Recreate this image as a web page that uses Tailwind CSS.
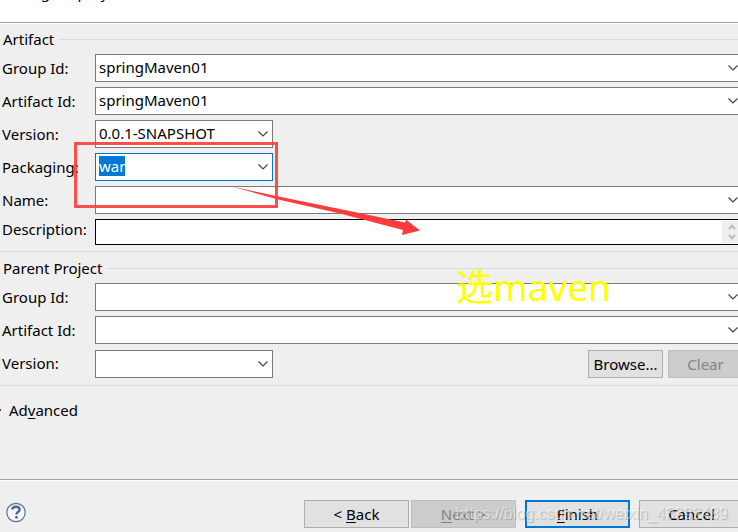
<!DOCTYPE html>
<html lang="en">
<head>
    <meta charset="UTF-8">
    <meta name="viewport" content="width=device-width, initial-scale=1.0">
    <title>New Maven Project</title>
    <script src="https://cdn.jsdelivr.net/npm/@tailwindcss/browser@4"></script>
</head>
<body class="bg-[#efefef] text-black text-[15px] leading-5 font-['Noto_Sans','Noto_Sans_CJK_SC',sans-serif] overflow-hidden">
    <svg class="hidden">
        <symbol id="chevron" viewBox="0 0 10 6"><path d="M.5 .5 5 5 9.5 .5" fill="none" stroke="#444" stroke-width="1.2"/></symbol>
    </svg>

    <div class="relative min-h-screen flex flex-col">
        <!-- Header -->
        <header class="h-[23px] bg-white border-b border-[#a0a0a0] flex items-end pb-5 pl-1 overflow-hidden">
            <p class="whitespace-nowrap">Configure project</p>
        </header>

        <!-- The form is a little wider than the window -->
        <form class="w-[calc(100%+5px)] border-t border-white">
            <!-- Artifact -->
            <fieldset class="pt-[5px] pb-1.5 border-b border-[#dcdcdc]">
                <legend class="contents"><span class="flex items-center gap-1 pl-[3px] after:flex-1 after:h-px after:bg-[#dcdcdc]">Artifact</span></legend>
                <div class="grid grid-cols-[93px_1fr] items-center gap-y-[5px] pl-0.5 pt-[5px] [&>label]:pb-px">
                    <label for="group-id">Group Id:</label>
                    <div class="flex h-7 bg-white border border-[#7a7a7a]">
                        <input id="group-id" type="text" value="springMaven01" class="flex-1 min-w-0 pl-[3px] pb-0.5 outline-none">
                        <button type="button" aria-label="Group Id history" class="px-1"><svg class="w-2.5 h-1.5"><use href="#chevron"/></svg></button>
                    </div>
                    <label for="artifact-id">Artifact Id:</label>
                    <div class="flex h-7 bg-white border border-[#7a7a7a]">
                        <input id="artifact-id" type="text" value="springMaven01" class="flex-1 min-w-0 pl-[3px] pb-0.5 outline-none">
                        <button type="button" aria-label="Artifact Id history" class="px-1"><svg class="w-2.5 h-1.5"><use href="#chevron"/></svg></button>
                    </div>
                    <label for="version">Version:</label>
                    <div class="grid w-[178px] h-7 items-center bg-white border border-[#7a7a7a]">
                        <select id="version" class="col-start-1 row-start-1 appearance-none pl-[3px] pb-0.5 outline-none">
                            <option>0.0.1-SNAPSHOT</option>
                        </select>
                        <svg class="col-start-1 row-start-1 justify-self-end mr-1 w-2.5 h-1.5 pointer-events-none"><use href="#chevron"/></svg>
                    </div>
                    <label for="packaging">Packaging:</label>
                    <div class="flex w-[178px] h-7 bg-white border border-[#0078d7]">
                        <input id="packaging" type="text" value="war" class="flex-1 min-w-0 pl-[3px] pb-0.5 outline-none caret-[#ff8728] selection:bg-[#0078d7] selection:text-white">
                        <button type="button" aria-label="Packaging types" class="px-1"><svg class="w-2.5 h-1.5"><use href="#chevron"/></svg></button>
                    </div>
                    <label for="name">Name:</label>
                    <div class="flex h-7 bg-white border border-[#7a7a7a]">
                        <input id="name" type="text" class="flex-1 min-w-0 pl-[3px] pb-0.5 outline-none">
                        <button type="button" aria-label="Name history" class="px-1"><svg class="w-2.5 h-1.5"><use href="#chevron"/></svg></button>
                    </div>
                    <label for="description" class="self-start">Description:</label>
                    <div class="flex h-[26px] bg-white border border-black">
                        <textarea id="description" class="flex-1 min-w-0 pl-[3px] resize-none outline-none overflow-hidden"></textarea>
                        <div class="w-[19px] my-px mr-px flex flex-col items-center justify-between bg-[#efefef] py-0.5">
                            <svg class="w-2 h-[7px]" viewBox="0 0 8 7"><path d="M1 6 4 2.500 7 6" fill="none" stroke="#bdbdbd" stroke-width="2"/></svg>
                            <svg class="w-2 h-[7px]" viewBox="0 0 8 7"><path d="M1 1 4 4.500 7 1" fill="none" stroke="#bdbdbd" stroke-width="2"/></svg>
                        </div>
                    </div>
                </div>
            </fieldset>

            <!-- Parent Project -->
            <fieldset class="pt-1.5 pb-[7px] border-b border-[#dcdcdc]">
                <legend class="contents"><span class="flex items-center gap-1 pl-[3px] after:flex-1 after:h-px after:bg-[#dcdcdc]">Parent Project</span></legend>
                <div class="grid grid-cols-[93px_1fr] items-center gap-y-[5px] pl-0.5 pt-[5px] [&>label]:pb-px">
                    <label for="parent-group-id">Group Id:</label>
                    <div class="flex h-7 bg-white border border-[#7a7a7a]">
                        <input id="parent-group-id" type="text" class="flex-1 min-w-0 pl-[3px] pb-0.5 outline-none">
                        <button type="button" aria-label="Parent Group Id history" class="px-1"><svg class="w-2.5 h-1.5"><use href="#chevron"/></svg></button>
                    </div>
                    <label for="parent-artifact-id">Artifact Id:</label>
                    <div class="flex h-7 bg-white border border-[#7a7a7a]">
                        <input id="parent-artifact-id" type="text" class="flex-1 min-w-0 pl-[3px] pb-0.5 outline-none">
                        <button type="button" aria-label="Parent Artifact Id history" class="px-1"><svg class="w-2.5 h-1.5"><use href="#chevron"/></svg></button>
                    </div>
                    <label for="parent-version">Version:</label>
                    <div class="flex gap-[5px] pt-px">
                        <div class="grid w-[178px] h-7 items-center bg-white border border-[#7a7a7a] mr-auto">
                            <select id="parent-version" class="col-start-1 row-start-1 appearance-none pl-[3px] pb-0.5 outline-none">
                                <option></option>
                            </select>
                            <svg class="col-start-1 row-start-1 justify-self-end mr-1 w-2.5 h-1.5 pointer-events-none"><use href="#chevron"/></svg>
                        </div>
                        <button type="button" class="w-[75px] h-7 bg-[#e1e1e1] border border-[#adadad]">Browse...</button>
                        <button type="button" disabled class="w-[75px] h-7 bg-[#cccccc] border border-[#bfbfbf] text-[#838383]">Clear</button>
                    </div>
                </div>
            </fieldset>

            <!-- Advanced -->
            <button type="button" class="flex items-center gap-2 mt-3.5">
                <svg class="w-px h-1" viewBox="0 0 1 4"><path d="M0 1h1v2H0z" fill="#444"/></svg>
                <span>Ad<u class="underline-offset-2">v</u>anced</span>
            </button>
        </form>

        <!-- Wizard buttons -->
        <footer class="mt-auto w-[calc(100%+6px)] h-[53px] border-t border-[#a0a0a0] shadow-[inset_0_1px_0_#fff] flex items-start pt-5">
            <button type="button" aria-label="Help" class="ml-1.5 mr-auto mt-0.5">
                <svg class="w-5 h-[21px]" viewBox="0 0 20 21">
                    <circle cx="10" cy="10.500" r="9.200" fill="#f5f6f8" stroke="#5f7296" stroke-width="1.200"/>
                    <path d="M6.400 7.500C6.500 5.700 8 4.700 10 4.700c2.100 0 3.600 1 3.600 2.800 0 1.500-1 2.100-1.900 2.700-.9.600-1.200 1-1.200 2.300" fill="none" stroke="#50648c" stroke-width="2.400"/>
                    <rect x="9.100" y="14" width="2.700" height="2.400" rx="1" fill="#50648c"/>
                </svg>
            </button>
            <button type="button" class="w-[105px] h-7 bg-[#e1e1e1] border border-[#adadad]">&lt; <u class="underline-offset-2">B</u>ack</button>
            <button type="button" disabled class="ml-0.5 w-[105px] h-7 bg-[#cccccc] border border-[#bfbfbf] text-[#838383]"><u class="underline-offset-2">N</u>ext &gt;</button>
            <button type="submit" class="ml-[9px] w-[105px] h-7 bg-[#e1e1e1] border-2 border-[#0078d7]"><u class="underline-offset-2">F</u>inish</button>
            <button type="button" class="ml-[9px] w-[105px] h-7 bg-[#e1e1e1] border border-[#adadad]">Cancel</button>
        </footer>

        <!-- Notes drawn over the dialog -->
        <div class="absolute left-[74px] top-[142px] w-[204px] h-[66px] border-3 border-[#ff3b3b]/90 pointer-events-none"></div>
        <svg class="absolute left-[228px] top-[184px] w-[194px] h-[54px] pointer-events-none" viewBox="0 0 194 54">
            <path d="M2 2 48 12 112 25 177 38.500 178 35.500 192 46.500 174 51 175 46 112 29.500 48 15 Z" fill="#ff3b3b"/>
        </svg>
        <p class="absolute left-[456px] top-[263px] text-[37px] leading-[48px] text-[#ffff00] pointer-events-none">选maven</p>
        <p class="absolute right-2.5 bottom-2 text-[16px] leading-5 font-['Liberation_Sans',sans-serif] text-white/50 [text-shadow:1px_1px_1px_#0003] pointer-events-none">https://blog.csdn.net/weixin_43392489</p>
    </div>

    <script>
        const packaging = document.getElementById('packaging');
        packaging.focus();
        packaging.select();
    </script>
</body>
</html>
